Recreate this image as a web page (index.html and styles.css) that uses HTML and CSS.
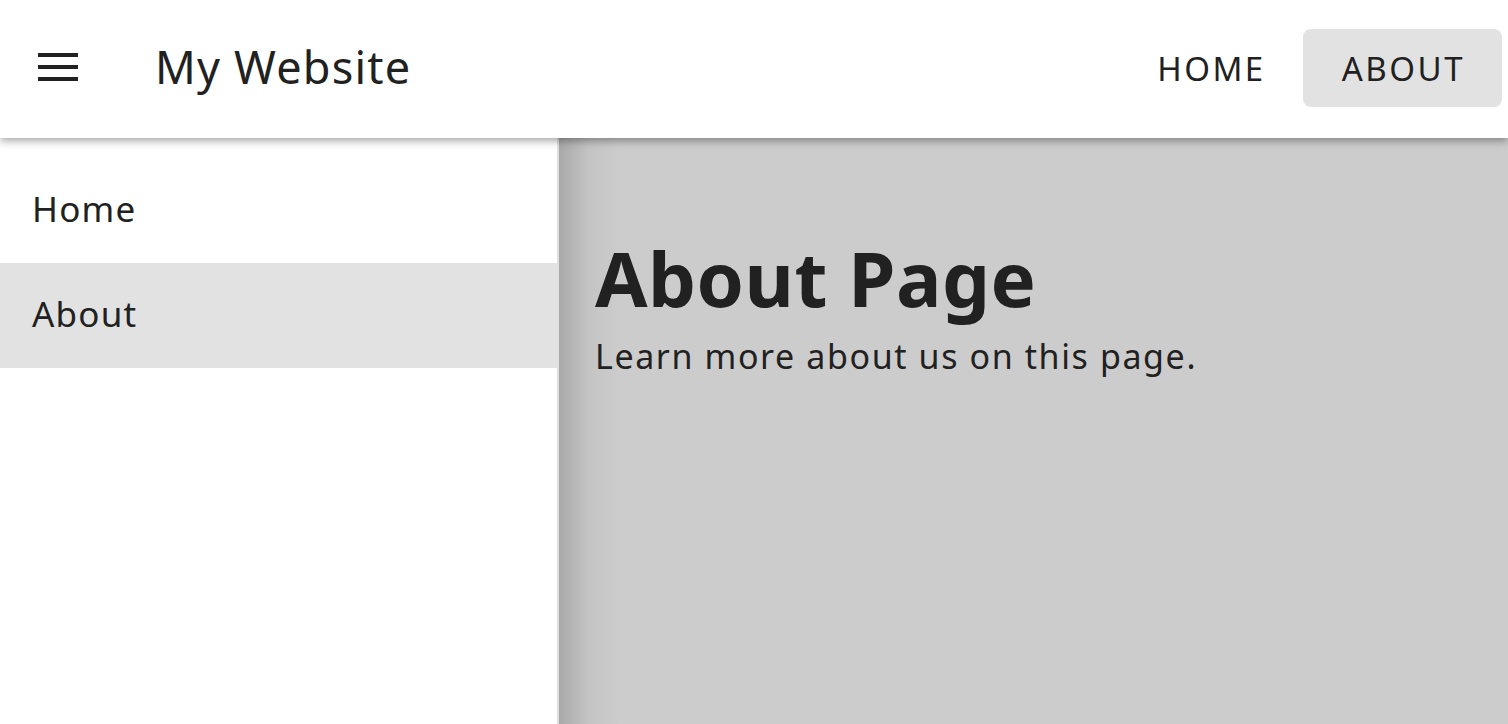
FILE: index.html
```html
<!DOCTYPE html>
<html lang="en">
<head>
    <meta charset="UTF-8">
    <meta name="viewport" content="width=device-width, initial-scale=1.0">
    <title>My Website</title>
    <link rel="stylesheet" href="styles.css">
</head>
<body>
    <header class="appbar">
        <button class="appbar__menu" aria-label="menu">
            <svg width="40" height="28" viewBox="0 0 40 28">
                <rect x="0" y="0" width="40" height="4" fill="#212121"/>
                <rect x="0" y="12" width="40" height="4" fill="#212121"/>
                <rect x="0" y="24" width="40" height="4" fill="#212121"/>
            </svg>
        </button>
        <h1 class="appbar__title">My Website</h1>
        <nav class="appbar__nav">
            <a class="nav-btn" href="#">Home</a>
            <a class="nav-btn nav-btn--active" href="#">About</a>
        </nav>
    </header>
    <div class="layout">
        <aside class="drawer">
            <ul class="drawer__list">
                <li class="drawer__item">Home</li>
                <li class="drawer__item drawer__item--active">About</li>
            </ul>
        </aside>
        <main class="content">
            <h2 class="content__title">About Page</h2>
            <p class="content__text">Learn more about us on this page.</p>
        </main>
    </div>
</body>
</html>
```
FILE: styles.css
```css
* { margin: 0; padding: 0; box-sizing: border-box; }
html, body { height: 100%; }
body {
    font-family: "Noto Sans", "Liberation Sans", sans-serif;
    color: #212121;
    background: #fff;
    overflow: hidden;
}
ul { list-style: none; }

.appbar{
    position: relative;
    z-index: 2;
    height: 138px;
    display: flex;
    align-items: center;
    background: #fff;
    box-shadow: 0 3px 8px rgba(0,0,0,0.35);
}
.appbar__menu{
    display: flex;
    margin-left: 38px;
    margin-top: -4px;
    border: none;
    background: none;
}
.appbar__title{
    margin-left: 77px;
    font-size: 45px;
    font-weight: 400;
    letter-spacing: 1.2px;
    flex: 1;
    margin-top: -6px;
}
.appbar__nav{
    display: flex;
    align-self: flex-start;
    margin-top: 29px;
    margin-right: 6px;
}
.nav-btn{
    height: 78px;
    padding: 0 37px 0 39px;
    display: flex;
    align-items: center;
    font-size: 33px;
    letter-spacing: 2.5px;
    text-transform: uppercase;
    color: #212121;
    text-decoration: none;
    border-radius: 8px;
}
.nav-btn--active{
    background: #e2e2e2;
}

.layout{
    display: flex;
    height: calc(100% - 138px);
}
.drawer{
    width: 559px;
    border-right: 2px solid #e0e0e0;
    background: #fff;
    padding-top: 20px;
}
.drawer__item{
    height: 105px;
    padding-left: 32px;
    padding-bottom: 4px;
    display: flex;
    align-items: center;
    font-size: 35px;
    letter-spacing: 1.2px;
}
.drawer__item--active{
    background: #e2e2e2;
}
.content{
    flex: 1;
    padding: 102px 36px;
    background: linear-gradient(to right, #a9a9a9, #c4c4c4 30px, #cccccc 60px);
}
.content__title{
    font-size: 76px;
    font-weight: 700;
    line-height: 1;
    letter-spacing: 0.5px;
}
.content__text{
    font-size: 34px;
    letter-spacing: 1.6px;
    margin-top: 17px;
}
```
